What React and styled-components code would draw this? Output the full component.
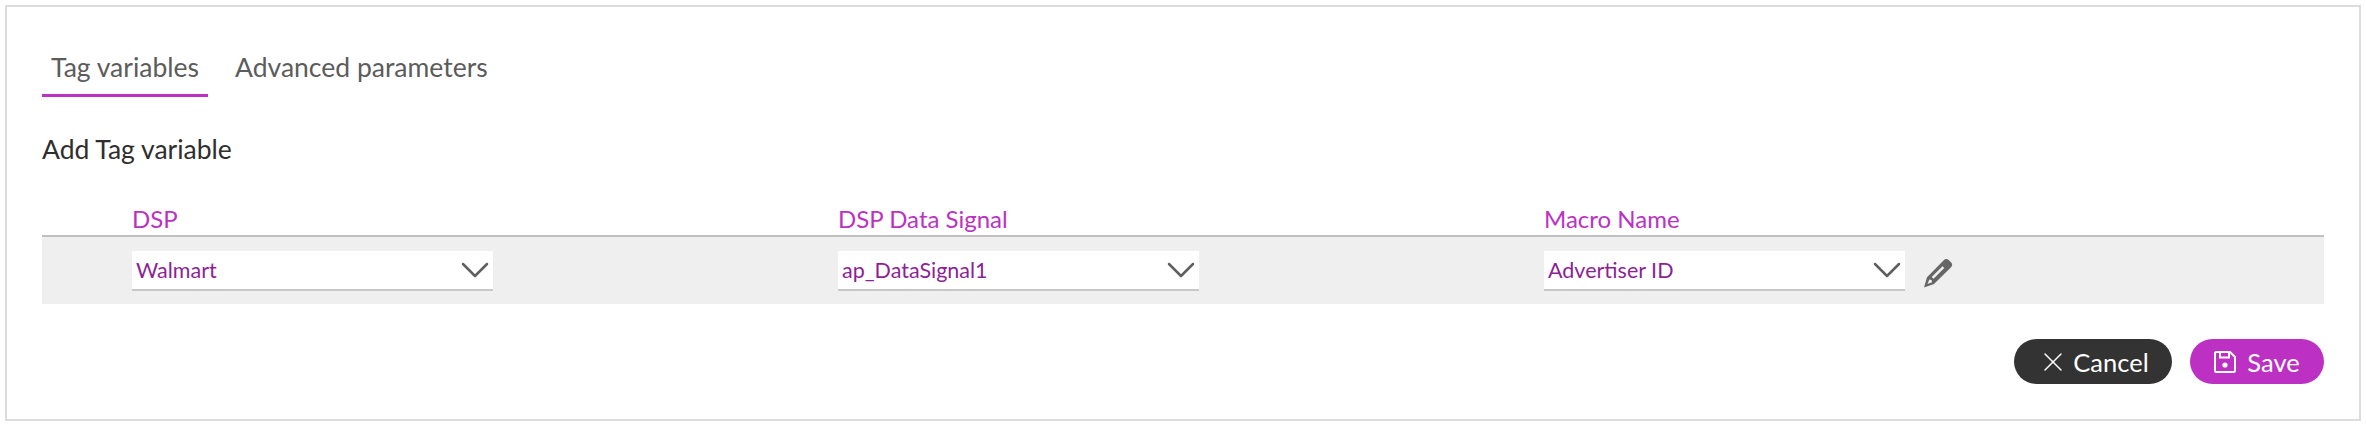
import React, { useState } from 'react';
import styled, { createGlobalStyle } from 'styled-components';
import { ChevronDown, X } from 'lucide-react';

const GlobalStyle = createGlobalStyle`
    html, body {
        margin: 0;
        padding: 0;
        background: #fff;
    }
    body {
        font-family: Lato, "Open Sans", sans-serif;
    }
`;

const columns = [
    { label: 'DSP', value: 'Walmart' },
    { label: 'DSP Data Signal', value: 'ap_DataSignal1' },
    { label: 'Macro Name', value: 'Advertiser ID' },
];

const App = () => {
    const [tab, setTab] = useState('variables');

    return (
        <Page>
            <GlobalStyle />
            <Card>
                <Tabs>
                    <Tab $active={tab === 'variables'} onClick={() => setTab('variables')}>Tag variables</Tab>
                    <Tab $active={tab === 'advanced'} onClick={() => setTab('advanced')}>Advanced parameters</Tab>
                </Tabs>
                <Title>Add Tag variable</Title>
                <HeaderRow>
                    {columns.map((c) => (
                        <HeaderCell key={c.label}>{c.label}</HeaderCell>
                    ))}
                </HeaderRow>
                <BodyRow>
                    {columns.map((c) => (
                        <Cell key={c.label}>
                            <Select>
                                <SelectText>{c.value}</SelectText>
                                <Chevron size={48} strokeWidth={1.25} color="#5f5f5f" />
                            </Select>
                        </Cell>
                    ))}
                    <EditIcon viewBox="0 0 30 30" aria-hidden="true">
                        <path
                            d="M20.500 2.500c1.600-1.600 3.600-1.900 5.100-.5l2.600 2.400c1.500 1.500 1.200 3.500-.4 5.100L11 26 1 29.500 4 19.300zM19.500 8.200 8.700 19l1.800 1.800L21.300 10zM6.300 21.500l-1.800 4.400 4.600-1.600-.5-2.300z"
                            fill="#666"
                            fillRule="evenodd"
                        />
                    </EditIcon>
                </BodyRow>
                <Actions>
                    <ActionButton $bg="#333333" $wide="158px" $gap="4px">
                        <X size={32} strokeWidth={1.1} />
                        Cancel
                    </ActionButton>
                    <ActionButton $bg="#bc31c4" $wide="134px" $gap="11px">
                        <svg width="22" height="22" viewBox="0 0 22 22" fill="none" stroke="#fff" strokeWidth="2" aria-hidden="true">
                            <path d="M2.500 1h13.500L21 6v13.500a1.500 1.500 0 0 1-1.500 1.500h-17A1.500 1.500 0 0 1 1 19.500v-17A1.500 1.500 0 0 1 2.500 1z" />
                            <path d="M6 1v5.500h9V1" />
                            <circle cx="11" cy="14" r="2.600" fill="#fff" stroke="none" />
                        </svg>
                        Save
                    </ActionButton>
                </Actions>
            </Card>
        </Page>
    );
};

const Page = styled.div`
    width: 2366px;
    height: 428px;
    padding: 5px 5px 7px 5px;
    box-sizing: border-box;
`;

const Card = styled.div`
    height: 100%;
    box-sizing: border-box;
    border: 2px solid #dcdcdc;
    padding: 37px 35px 0 35px;
`;

const Tabs = styled.div`
    display: flex;
    gap: 18px;
`;

const Tab = styled.div`
    height: 53px;
    padding: 0 9px;
    box-sizing: border-box;
    font-size: 26.5px;
    line-height: 46px;
    color: #5c5c5c;
    cursor: pointer;
    border-bottom: 3px solid ${(p) => (p.$active ? '#bc31c4' : 'transparent')};
`;

const Title = styled.div`
    margin-top: 35px;
    font-size: 26.5px;
    line-height: 34px;
    color: #2e2e2e;
`;

const HeaderRow = styled.div`
    margin-top: 37px;
    padding-left: 90px;
    display: grid;
    grid-template-columns: repeat(3, 706px);
    height: 32px;
    border-bottom: 2px solid #c0c0c0;
`;

const HeaderCell = styled.div`
    font-size: 24px;
    line-height: 32px;
    color: #bc31c4;
`;

const BodyRow = styled.div`
    height: 67px;
    padding: 1px 0 0 90px;
    box-sizing: border-box;
    display: grid;
    grid-template-columns: repeat(3, 706px) 1fr;
    align-items: center;
    background: #efefef;
    position: relative;
`;

const Cell = styled.div`
    display: flex;
`;

const Select = styled.div`
    width: 361px;
    height: 40px;
    box-sizing: border-box;
    background: #fff;
    border-bottom: 2px solid #c8c8c8;
    padding: 0 4px;
    display: flex;
    align-items: center;
    justify-content: space-between;
`;

const SelectText = styled.span`
    font-size: 21.5px;
    color: #8e1f96;
`;

const Chevron = styled(ChevronDown)`
    margin: -6px -10px -6px 0;
`;

const EditIcon = styled.svg`
    width: 30px;
    height: 30px;
    position: absolute;
    left: 1881px;
    top: 21px;
`;

const Actions = styled.div`
    margin-top: 35px;
    display: flex;
    justify-content: flex-end;
    gap: 18px;
`;

const ActionButton = styled.button`
    width: ${(p) => p.$wide};
    height: 45px;
    border: none;
    border-radius: 23px;
    background: ${(p) => p.$bg};
    color: #fff;
    font-family: inherit;
    font-size: 25.5px;
    display: flex;
    align-items: center;
    justify-content: center;
    gap: ${(p) => p.$gap};
    cursor: pointer;
`;

export default App;
